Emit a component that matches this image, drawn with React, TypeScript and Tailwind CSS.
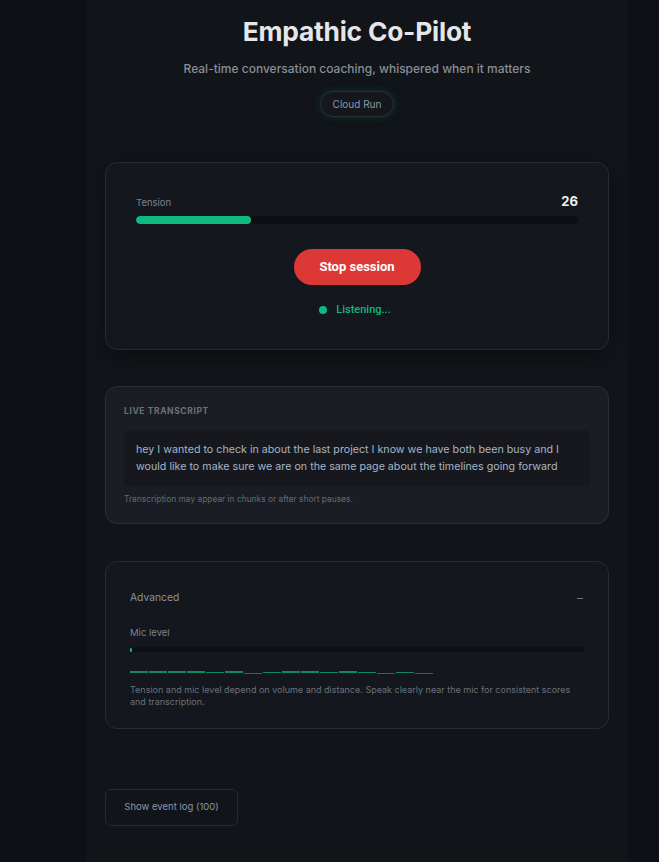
import { useState } from 'react';

// wave segments: 0 = full, 1 = thin, 2 = low
const wave = [0, 0, 0, 0, 1, 0, 2, 1, 0, 0, 1, 0, 1, 2, 1, 2];

export default function App() {
  const [advancedOpen, setAdvancedOpen] = useState(true);
  const tension = 26;

  return (
    <div className="min-h-screen bg-[#0d1017] flex justify-center pl-[55px] font-['Inter',sans-serif]">
      <div className="w-[542px] min-h-screen bg-[#111419] px-[19px] pt-[14px] pb-10 flex flex-col">
        <header className="flex flex-col items-center">
          <h1 className="text-[26.3px] leading-[36px] font-bold text-[#e4e6ea] tracking-[-0.2px]">
            Empathic Co-Pilot
          </h1>
          <p className="mt-[9px] text-[12px] leading-[20px] font-medium text-[#898e97]">
            Real-time conversation coaching, whispered when it matters
          </p>
          <span className="mt-[12px] h-[26px] px-[12px] flex items-center rounded-full border border-[#2a3230] bg-[#14171c] text-[10px] text-[#8a97ab] shadow-[0_0_8px_rgba(16,185,129,0.18)]">
            Cloud Run
          </span>
        </header>

        {/* session card */}
        <section className="mt-[45px] rounded-xl border border-[#272b32] bg-[#14171d] px-[30px] pt-[31px] pb-[31px] shadow-[0_6px_20px_rgba(0,0,0,0.35)]">
          <div className="flex items-center justify-between h-[16px]">
            <span className="text-[9.5px] text-[#7d828b] pt-[3px]">Tension</span>
            <span className="text-[13px] font-bold text-[#f1f2f4]">{tension}</span>
          </div>
          <div className="mt-[6px] h-[8px] w-full rounded-full bg-[#0d0f13] overflow-hidden">
            <div className="h-full rounded-full bg-[#10b981]" style={{ width: `${tension}%` }} />
          </div>
          <div className="mt-[25px] flex justify-center">
            <button className="h-[36px] w-[127px] rounded-full bg-[#db3836] text-[13px] font-bold text-white font-['Roboto',sans-serif]">
              Stop session
            </button>
          </div>
          <div className="mt-[17px] flex items-center justify-center gap-[9px] h-[16px] pr-[4px]">
            <span className="h-[8px] w-[8px] rounded-full bg-[#10b981]" />
            <span className="text-[11px] font-medium text-[#15b57f] font-['Roboto',sans-serif]">Listening...</span>
          </div>
        </section>

        {/* transcript card */}
        <section className="mt-[36px] rounded-xl border border-[#2a2e35] bg-[#1a1d23] px-[18px] pt-[18px] pb-[18px]">
          <h2 className="text-[8.5px] leading-[12px] font-bold tracking-[0.6px] text-[#6b717c]">LIVE TRANSCRIPT</h2>
          <div className="mt-[13px] rounded-md bg-[#16181d] px-[12px] pt-[11px] pb-[12px]">
            <p className="text-[10.7px] leading-[17px] text-[#a6b5c7]">
              hey I wanted to check in about the last project I know we have both been busy and I would like to make
              sure we are on the same page about the timelines going forward
            </p>
          </div>
          <p className="mt-[6px] text-[8.4px] leading-[12px] text-[#646a74]">
            Transcription may appear in chunks or after short pauses.
          </p>
        </section>

        {/* advanced card */}
        <section className="mt-[37px] rounded-xl border border-[#272b32] bg-[#14171d] px-[24px] pt-[28px] pb-[20px]">
          <button
            onClick={() => setAdvancedOpen(!advancedOpen)}
            className="w-full flex items-center justify-between h-[16px] text-[10.3px] text-[#8d929b]"
          >
            <span>Advanced</span>
            <span className="text-[#6b7079] text-[12px] pr-[1px]">–</span>
          </button>
          {advancedOpen && (
            <div>
              <div className="mt-[20px] text-[9.5px] leading-[14px] text-[#7d828b]">Mic level</div>
              <div className="mt-[7px] h-[5px] w-full rounded-sm bg-[#0e1014] flex items-center">
                <div className="h-[4px] w-[2px] rounded-sm bg-[#10b981]" />
              </div>
              <div className="mt-[19px] flex gap-[1px] h-[3px]">
                {wave.map((w, i) => (
                  <div
                    key={i}
                    className={
                      w === 0
                        ? 'w-[18px] h-[2px] bg-[#0f8a63]'
                        : w === 1
                        ? 'w-[18px] h-[1px] mt-[1px] bg-[#0f8a63]'
                        : 'w-[18px] h-[1px] mt-[2px] bg-[#0d7a58]'
                    }
                  />
                ))}
              </div>
              <p className="mt-[10px] text-[9px] leading-[12px] text-[#6b717b]">
                Tension and mic level depend on volume and distance. Speak clearly near the mic for consistent scores
                and transcription.
              </p>
            </div>
          )}
        </section>

        <div className="mt-[60px]">
          <button className="h-[37px] w-[133px] rounded-md border border-[#262a31] bg-[#111419] text-[9.5px] text-[#8a97ab]">
            Show event log (100)
          </button>
        </div>
      </div>
    </div>
  );
}
